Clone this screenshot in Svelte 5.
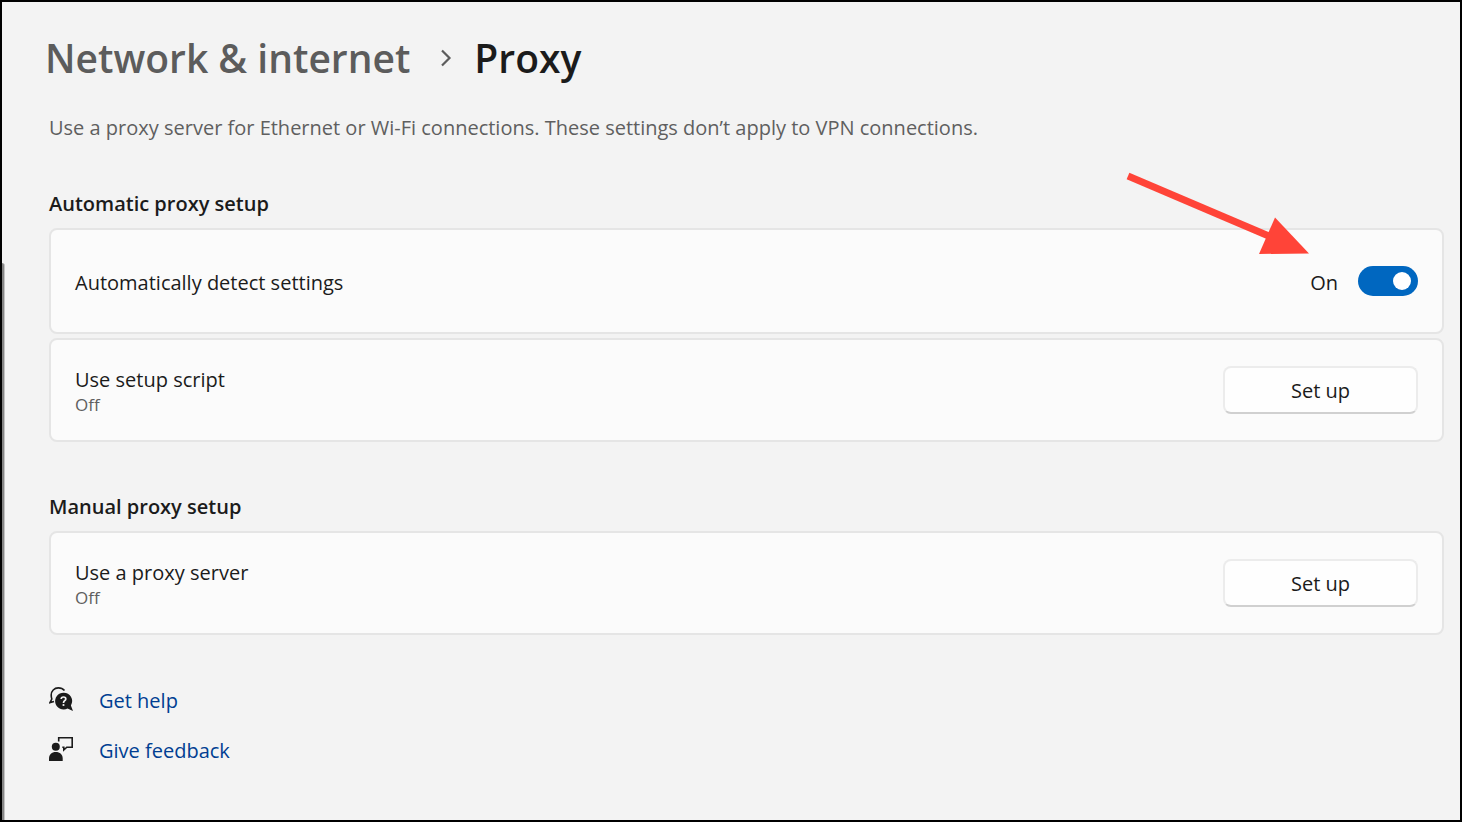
<script>
	let autoDetect = $state(true);
</script>

<div class="window">
	<div class="edge"></div>

	<main>
		<nav class="breadcrumb" aria-label="Breadcrumb">
			<a href="#network">Network &amp; internet</a>
			<svg width="12" height="18" viewBox="0 0 12 18" aria-hidden="true">
				<path d="M2 1.5 9.5 9 2 16.5" fill="none" stroke="#5c5c5c" stroke-width="2.2" />
			</svg>
			<h1>Proxy</h1>
		</nav>

		<p class="intro">
			Use a proxy server for Ethernet or Wi-Fi connections. These settings don’t apply to VPN connections.
		</p>

		<section>
			<h2>Automatic proxy setup</h2>
			<div class="card tall">
				<label class="title" for="detect">Automatically detect settings</label>
				<div class="switch">
					<span class="title">{autoDetect ? 'On' : 'Off'}</span>
					<input id="detect" type="checkbox" role="switch" bind:checked={autoDetect} />
				</div>
				<svg class="arrow" width="184" height="84" viewBox="0 0 184 84" aria-hidden="true">
					<path d="M2 6 145 67" stroke="#ff4438" stroke-width="7" />
					<path d="M149 47.5 183 83.5 133 84Z" fill="#ff4438" />
				</svg>
			</div>
			<div class="card">
				<div>
					<div class="title" id="script-title">Use setup script</div>
					<div class="status">Off</div>
				</div>
				<button type="button" aria-describedby="script-title">Set up</button>
			</div>
		</section>

		<section>
			<h2>Manual proxy setup</h2>
			<div class="card">
				<div>
					<div class="title" id="server-title">Use a proxy server</div>
					<div class="status">Off</div>
				</div>
				<button type="button" aria-describedby="server-title">Set up</button>
			</div>
		</section>

		<footer>
			<a href="#help">
				<svg width="24" height="24" viewBox="0 0 24 24" aria-hidden="true">
					<path d="M15.5 3.6C14 1.8 11.7.9 9.3.9 5.2.9 2.2 4 2.2 8c0 1.7.2 2.900.6 4L1 15.600l4-1.200" fill="none" stroke="#1b1b1b" stroke-width="1.6" />
					<path d="M14.5 5.700a8.400 8.400 0 1 0 4 15.800L24 24l-2.100-5.600A8.400 8.400 0 0 0 14.500 5.700Z" fill="#1b1b1b" />
					<path d="M12.2 12.100c0-1.400 1-2.100 2.300-2.100s2.300.8 2.300 2c0 1.700-2.300 1.800-2.300 3.900" fill="none" stroke="#f3f3f3" stroke-width="1.7" />
					<circle cx="14.5" cy="18" r="1.1" fill="#f3f3f3" />
				</svg>
				<span>Get help</span>
			</a>
			<a href="#feedback">
				<svg width="24" height="24" viewBox="0 0 24 24" aria-hidden="true">
					<circle cx="6.8" cy="9.7" r="4" fill="#1b1b1b" />
					<path d="M0 24v-2.500C0 17.500 2.700 15 6.800 15s6.900 2.500 6.900 6.500V24Z" fill="#1b1b1b" />
					<path d="M9.700 4.500V.8h13.500v9.400h-5.400l-3 2.800v-2.800h-1.500" fill="none" stroke="#1b1b1b" stroke-width="1.6" />
				</svg>
				<span>Give feedback</span>
			</a>
		</footer>
	</main>
</div>

<style>
	:global(body) {
		background: #f3f3f3;
		font-family: 'Segoe UI', 'Open Sans', 'Noto Sans', sans-serif;
		font-size: 20px;
		line-height: 28px;
		color: #1b1b1b;
	}

	.window {
		position: relative;
		box-sizing: border-box;
		min-height: 100vh;
		border: 2px solid #000;
	}

	.edge {
		position: absolute;
		top: 261px;
		bottom: 0;
		left: 0;
		width: 2px;
		background: #858585;
		border-right: 1px solid #c4c4c4;
		border-top-right-radius: 3px;
	}

	main {
		padding: 29px 16px 40px 47px;
	}

	.breadcrumb {
		display: flex;
		align-items: center;
		margin-left: -4px;
		font-size: 39px;
		font-weight: 600;
		line-height: 54px;
	}

	.breadcrumb a {
		color: #5c5c5c;
		text-decoration: none;
	}

	.breadcrumb svg {
		margin: 0 22px 0 30px;
	}

	h1 {
		margin: 0;
		font: inherit;
	}

	.intro {
		margin: 29px 0 48px;
		color: #5f5f5f;
	}

	section + section {
		margin-top: 51px;
	}

	h2 {
		margin: 0 0 10px;
		font-size: 20px;
		font-weight: 600;
		line-height: 28px;
	}

	.card {
		position: relative;
		display: flex;
		align-items: center;
		justify-content: space-between;
		box-sizing: border-box;
		min-height: 104px;
		padding: 0 24px;
		background: #fbfbfb;
		border: 2px solid #e5e5e5;
		border-radius: 8px;
	}

	.card + .card {
		margin-top: 4px;
	}

	.tall {
		min-height: 106px;
	}

	.title {
		padding-top: 3px;
	}

	.status {
		padding-bottom: 2px;
		font-size: 17px;
		line-height: 22px;
		color: #5f5f5f;
	}

	.switch {
		display: flex;
		align-items: center;
		gap: 20px;
	}

	.switch input {
		appearance: none;
		width: 60px;
		height: 30px;
		margin: 0;
		border-radius: 15px;
		background: #8a8a8a;
		cursor: pointer;
	}

	.switch input::before {
		content: '';
		display: block;
		width: 18px;
		height: 18px;
		margin: 6px 7px;
		border-radius: 50%;
		background: #fff;
	}

	.switch input:checked {
		background: #0067c0;
	}

	.switch input:checked::before {
		margin-left: 35px;
	}

	/* points at the switch from above the card */
	.arrow {
		position: absolute;
		top: -60px;
		right: 132px;
		pointer-events: none;
	}

	button {
		width: 195px;
		height: 48px;
		padding: 2px 0 0;
		font: inherit;
		color: inherit;
		background: #fefefe;
		border: 2px solid #ececec;
		border-bottom-color: #d0d0d0;
		border-radius: 8px;
		cursor: pointer;
	}

	footer {
		display: flex;
		flex-direction: column;
		align-items: flex-start;
		gap: 18px;
		margin-top: 48px;
	}

	footer a {
		display: flex;
		align-items: center;
		gap: 26px;
		color: #003e92;
		text-decoration: none;
	}

	footer span {
		padding-top: 4px;
	}
</style>
